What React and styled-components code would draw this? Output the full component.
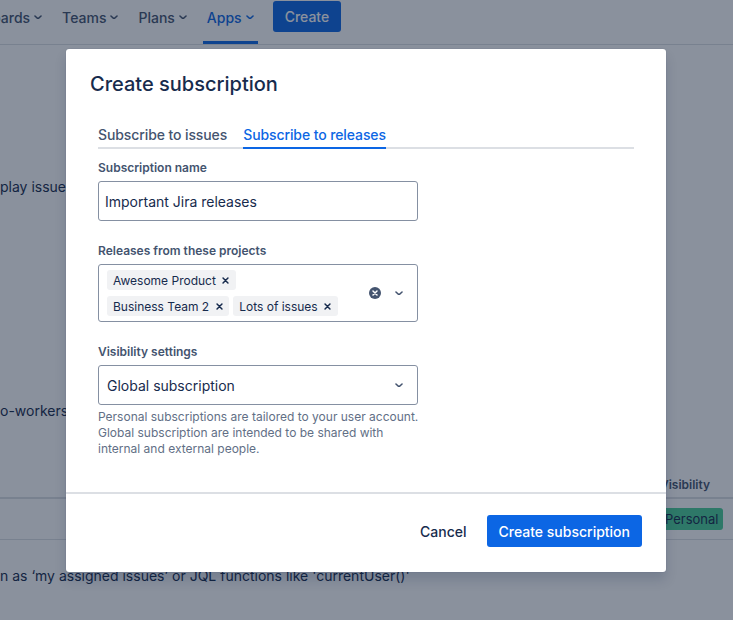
import React from "react";
import styled, { createGlobalStyle } from "styled-components";

const GlobalStyle = createGlobalStyle`
  * { box-sizing: border-box; }
  html, body { margin: 0; padding: 0; }
  body {
    font-family: Inter, "Noto Sans", "Liberation Sans", sans-serif;
    background: #fff;
    color: #172b4d;
    overflow: hidden;
  }
`;

const Screen = styled.div`
  position: relative;
  width: 100%;
  height: 620px;
  overflow: hidden;
`;

/* ---------- page behind the dialog ---------- */

const TopNav = styled.nav`
  display: flex;
  align-items: flex-start;
  height: 45px;
  border-bottom: 1px solid #dcdfe4;
  gap: 12px;
`;

const NavItem = styled.div`
  display: flex;
  align-items: center;
  gap: 4px;
  height: 44px;
  padding: 0 4px 7px;
  margin-left: ${({ $first }) => ($first ? "-21px" : "0")};
  border-bottom: 3px solid ${({ $active }) => ($active ? "#0c66e4" : "transparent")};
  color: ${({ $active }) => ($active ? "#0c66e4" : "#44546f")};
  font-size: 14px;
  font-weight: 500;
  white-space: nowrap;
`;

const NavCreate = styled.button`
  margin: 1px 0 0 3px;
  height: 31px;
  padding: 0 12px;
  border: 0;
  border-radius: 3px;
  background: #0c66e4;
  color: #fff;
  font: 500 14px Inter, "Noto Sans", sans-serif;
`;

const PageText = styled.p`
  margin: ${({ $top }) => $top}px 0 0;
  font-size: 14px;
  line-height: 20px;
  white-space: nowrap;
  color: #172b4d;
`;

const Table = styled.div`
  margin-top: 48px;
  display: grid;
  grid-template-columns: 1fr 74px;
`;

const HeadCell = styled.div`
  height: 30px;
  display: flex;
  align-items: center;
  padding: 3px 0 0 ${({ $inset }) => ($inset ? "1px" : "0")};
  border-bottom: 2px solid #dcdfe4;
  font-size: 12px;
  font-weight: 600;
  color: #44546f;
`;

const Cell = styled.div`
  height: 41px;
  display: flex;
  align-items: center;
  padding-left: ${({ $inset }) => ($inset ? "2px" : "0")};
  border-bottom: 1px solid #dcdfe4;
`;

const Lozenge = styled.span`
  display: inline-flex;
  align-items: center;
  height: 22px;
  padding: 0 4px;
  border-radius: 3px;
  background: #4bce97;
  color: #172b4d;
  font-size: 13px;
`;

/* ---------- dialog ---------- */

const Blanket = styled.div`
  position: absolute;
  inset: 0;
  background: rgba(17, 30, 55, 0.49);
  display: flex;
  justify-content: center;
  align-items: flex-start;
  padding-top: 49px;
`;

const Modal = styled.div`
  width: 600px;
  margin-left: -1px;
  background: #fff;
  border-radius: 3px;
  box-shadow: 0 8px 12px rgba(9, 30, 66, 0.15), 0 0 1px rgba(9, 30, 66, 0.31);
  display: flex;
  flex-direction: column;
`;

const Header = styled.div`
  padding: 23px 24px 0;
`;

const Title = styled.h1`
  margin: 0;
  font-size: 20px;
  line-height: 24px;
  font-weight: 500;
  color: #172b4d;
`;

const Body = styled.div`
  padding: 29px 32px 35px;
  border-bottom: 2px solid #dcdfe4;
`;

const TabList = styled.div`
  display: flex;
  gap: 16px;
  box-shadow: inset 0 -2px 0 #dcdfe4;
`;

const Tab = styled.div`
  padding-bottom: 4px;
  font-size: 14px;
  line-height: 20px;
  font-weight: 500;
  letter-spacing: -0.1px;
  color: ${({ $active }) => ($active ? "#0c66e4" : "#44546f")};
  box-shadow: ${({ $active }) => ($active ? "inset 0 -2px 0 #0c66e4" : "none")};
`;

const Form = styled.div`
  width: 320px;
  padding-top: 11px;
`;

const Field = styled.div`
  margin-top: ${({ $first }) => ($first ? "0" : "22px")};
`;

const Label = styled.div`
  margin-bottom: 5px;
  font-size: 12px;
  line-height: 16px;
  font-weight: 600;
  color: #44546f;
`;

const TextInput = styled.div`
  height: 40px;
  display: flex;
  align-items: center;
  padding: 0 6px;
  border: 1px solid #8590a2;
  border-radius: 3px;
  font-size: 14px;
  color: #172b4d;
`;

const SelectBox = styled.div`
  display: flex;
  align-items: center;
  min-height: ${({ $multi }) => ($multi ? "58px" : "40px")};
  padding: 0 6px 0 8px;
  border: 1px solid #8590a2;
  border-radius: 3px;
  font-size: 14px;
  color: #172b4d;
`;

const Values = styled.div`
  flex: 1;
  display: flex;
  flex-direction: column;
  gap: 6px;
  padding: 5px 0;
`;

const TagRow = styled.div`
  display: flex;
  gap: 4px;
`;

const Tag = styled.span`
  display: inline-flex;
  align-items: center;
  height: 20px;
  padding-left: 6px;
  border-radius: 3px;
  background: #f1f2f4;
  font-size: 12px;
  color: #172b4d;
`;

const TagRemove = styled.span`
  display: flex;
  align-items: center;
  justify-content: center;
  width: 20px;
  height: 20px;
  color: #172b4d;
`;

const Indicator = styled.span`
  display: flex;
  align-items: center;
  justify-content: center;
  width: 24px;
  height: 24px;
  color: #44546f;
`;

const SelectValue = styled.span`
  flex: 1;
`;

const Helper = styled.div`
  margin-top: 4px;
  width: 326px;
  font-size: 12px;
  line-height: 16px;
  color: #626f86;
`;

const Footer = styled.div`
  display: flex;
  justify-content: flex-end;
  gap: 8px;
  padding: 21px 24px 25px;
`;

const Button = styled.button`
  height: 32px;
  padding: 0 12px;
  border: 0;
  border-radius: 3px;
  background: ${({ $primary }) => ($primary ? "#0c66e4" : "transparent")};
  color: ${({ $primary }) => ($primary ? "#fff" : "#172b4d")};
  font: 500 14px Inter, "Noto Sans", sans-serif;
`;

const ChevronDown = ({ size = 8 }) => (
  <svg width={size} height={size * 0.6} viewBox="0 0 10 6" fill="none">
    <path d="M1.2 1.2 5 4.8 8.8 1.2" stroke="currentColor" strokeWidth="1.9" strokeLinecap="round" strokeLinejoin="round" />
  </svg>
);

const Cross = () => (
  <svg width="7" height="7" viewBox="0 0 8 8" fill="none">
    <path d="M1.2 1.2 6.8 6.8M6.8 1.2 1.2 6.8" stroke="currentColor" strokeWidth="1.7" strokeLinecap="round" />
  </svg>
);

const ClearIcon = () => (
  <svg width="12" height="12" viewBox="0 0 12 12">
    <circle cx="6" cy="6" r="6" fill="currentColor" />
    <path d="M4 4 8 8M8 4 4 8" stroke="#fff" strokeWidth="1.5" strokeLinecap="round" />
  </svg>
);

const projects = [["Awesome Product"], ["Business Team 2", "Lots of issues"]];

export default function App() {
  return (
    <Screen>
      <GlobalStyle />
      <TopNav>
        <NavItem $first>Boards <ChevronDown /></NavItem>
        <NavItem>Teams <ChevronDown /></NavItem>
        <NavItem>Plans <ChevronDown /></NavItem>
        <NavItem $active>Apps <ChevronDown /></NavItem>
        <NavCreate>Create</NavCreate>
      </TopNav>
      <PageText $top={132}>play issues that match your filter in a list</PageText>
      <PageText $top={204}>o-workers who need to stay up to date</PageText>
      <Table>
        <HeadCell />
        <HeadCell $inset>Visibility</HeadCell>
        <Cell />
        <Cell $inset><Lozenge>Personal</Lozenge></Cell>
      </Table>
      <PageText $top={26}>n as ‘my assigned issues’ or JQL functions like 'currentUser()'</PageText>

      <Blanket>
        <Modal>
          <Header>
            <Title>Create subscription</Title>
          </Header>
          <Body>
            <TabList>
              <Tab>Subscribe to issues</Tab>
              <Tab $active>Subscribe to releases</Tab>
            </TabList>
            <Form>
              <Field $first>
                <Label>Subscription name</Label>
                <TextInput>Important Jira releases</TextInput>
              </Field>
              <Field>
                <Label>Releases from these projects</Label>
                <SelectBox $multi>
                  <Values>
                    {projects.map((row, i) => (
                      <TagRow key={i}>
                        {row.map((name) => (
                          <Tag key={name}>
                            {name}
                            <TagRemove><Cross /></TagRemove>
                          </Tag>
                        ))}
                      </TagRow>
                    ))}
                  </Values>
                  <Indicator><ClearIcon /></Indicator>
                  <Indicator><ChevronDown /></Indicator>
                </SelectBox>
              </Field>
              <Field>
                <Label>Visibility settings</Label>
                <SelectBox>
                  <SelectValue>Global subscription</SelectValue>
                  <Indicator><ChevronDown /></Indicator>
                </SelectBox>
                <Helper>
                  Personal subscriptions are tailored to your user account. Global
                  subscription are intended to be shared with internal and external people.
                </Helper>
              </Field>
            </Form>
          </Body>
          <Footer>
            <Button>Cancel</Button>
            <Button $primary>Create subscription</Button>
          </Footer>
        </Modal>
      </Blanket>
    </Screen>
  );
}
